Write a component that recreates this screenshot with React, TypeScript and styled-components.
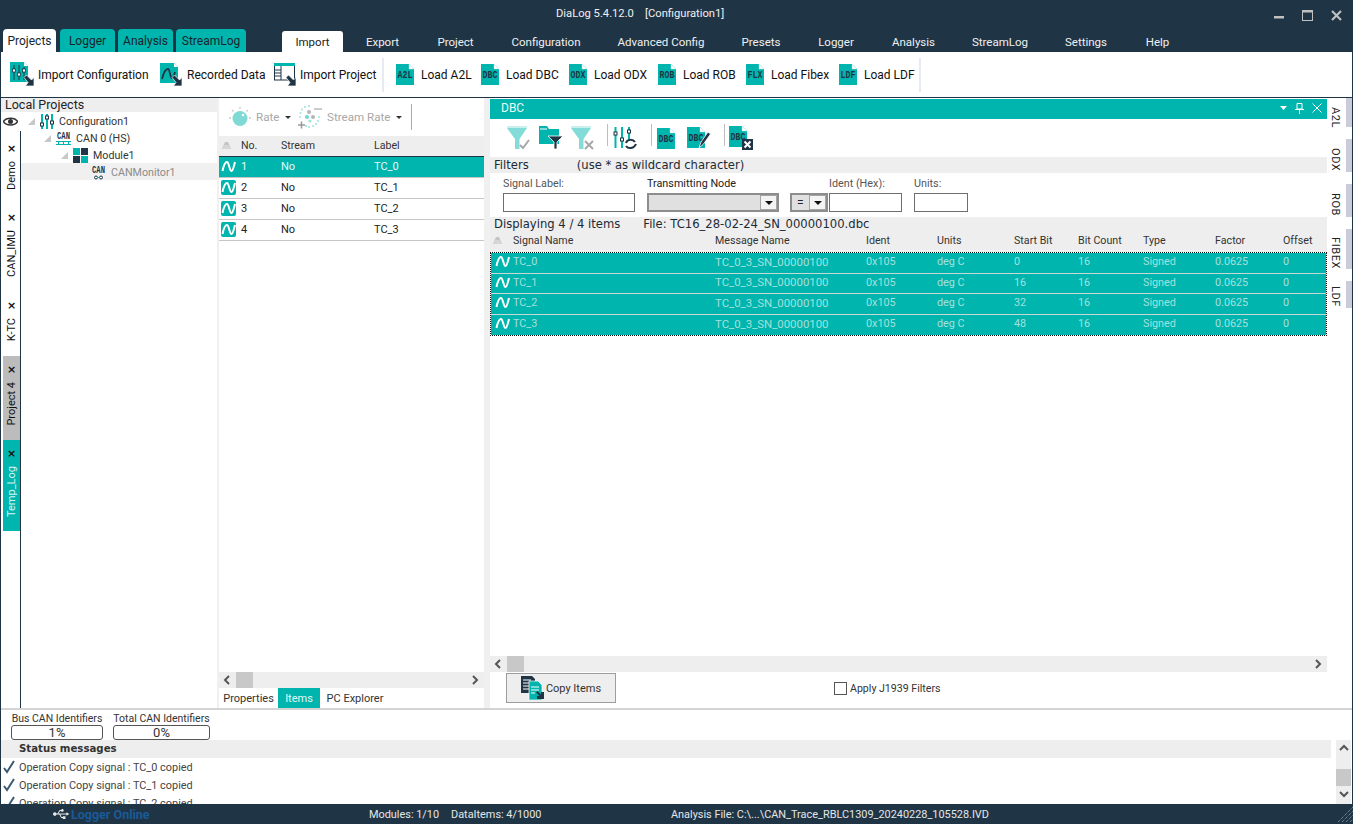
import React from "react";
import styled, { createGlobalStyle } from "styled-components";
import { FaUsb } from "react-icons/fa";

const TEAL = "#00b5ad";
const NAVY = "#1f3546";
const UI = `Roboto, "Liberation Sans", Arial, sans-serif`;

const Global = createGlobalStyle`
  html, body { margin: 0; padding: 0; background: ${NAVY}; }
  * { box-sizing: border-box; }
  body { font-family: ${UI}; font-size: 11px; color: #222; overflow: hidden; }
`;

const Shell = styled.div`
  width: 1353px; height: 824px; display: flex; flex-direction: column; background: ${NAVY}; overflow: hidden;
`;
const TitleBar = styled.div`
  height: 30px; flex: none; display: flex; align-items: center; color: #f0f0f0; padding-left: 556px; white-space: pre; font-size: 11.2px; padding-bottom: 4px;
`;
const WindowButtons = styled.div`
  margin-left: auto; display: flex; align-items: center; gap: 18px; padding-right: 11px; padding-top: 4px;
`;
const TabRow = styled.div`
  height: 22px; flex: none; display: flex; align-items: flex-end; padding-left: 3px; font-size: 12px;
`;
const AppTab = styled.div<{ $w: number; $gap: number; $active?: boolean }>`
  width: ${p => p.$w}px; height: 23px; margin-right: ${p => p.$gap}px; display: flex; align-items: center; justify-content: center;
  border-radius: 4px 4px 0 0; background: ${p => (p.$active ? "#fff" : TEAL)}; color: #18242c;
`;
const MenuTabs = styled.div`
  display: flex; margin-left: 33px; align-items: flex-end; font-size: 11.5px;
`;
const MenuTab = styled.div<{ $w: number; $active?: boolean }>`
  width: ${p => p.$w}px; height: 21px; display: flex; align-items: center; justify-content: center;
  border-radius: 3px 3px 0 0; background: ${p => (p.$active ? "#fff" : "transparent")}; color: ${p => (p.$active ? "#222" : "#f0f0f0")};
`;
const Ribbon = styled.div`
  height: 46px; flex: none; background: #fff; border-bottom: 1px solid ${NAVY}; margin: 0 1px; display: flex; align-items: center; padding: 0 0 0 9px;
`;
const RibbonItem = styled.div<{ $w: number; $gap: number }>`
  width: ${p => p.$w}px; display: flex; align-items: center; gap: ${p => p.$gap}px; color: #111; white-space: nowrap; font-size: 12px;
`;
const RibbonGap = styled.div<{ $w: number }>`
  width: ${p => p.$w}px; height: 34px; display: flex; justify-content: flex-start; padding-left: 2px;
  &::after { content: ""; width: 2px; background: #e6eaf2; }
`;
const Workspace = styled.div`
  height: 610px; flex: none; display: flex; background: #fff; margin: 0 0 0 1px; border-right: 1px solid ${NAVY};
`;
const LeftColumn = styled.div`
  width: 216px; flex: none; display: flex; flex-direction: column;
`;
const PaneTitle = styled.div`
  height: 14px; background: #eeeeee; padding-left: 4px; line-height: 14px; font-size: 12.5px; color: #222; flex: none;
`;
const LeftBody = styled.div`
  flex: 1; display: flex; min-height: 0;
`;
const Strip = styled.div`
  width: 20px; flex: none; display: flex; flex-direction: column; padding-left: 2px;
`;
const EyeCell = styled.div`
  height: 20px; flex: none; display: flex; align-items: center; margin-top: -1px;
`;
const VTabs = styled.div`
  flex: 1; border-right: 1px solid ${NAVY}; display: flex; flex-direction: column; padding-top: 4px;
`;
const VTab = styled.div<{ $h: number; $bg?: string; $light?: boolean }>`
  height: ${p => p.$h}px; background: ${p => p.$bg || "transparent"}; color: ${p => (p.$light ? "#d9f4f2" : "#111")};
  display: flex; flex-direction: column; align-items: center; padding-top: 9px; gap: 7px; flex: none;
`;
const VClose = styled.span`
  font: bold 11px/10px "DejaVu Sans", sans-serif; color: #111;
`;
const VLabel = styled.span`
  writing-mode: vertical-rl; transform: rotate(180deg); white-space: nowrap; font-size: 11px; line-height: 16px;
`;
const Tree = styled.div`
  flex: 1; padding-top: 0;
`;
const TreeRow = styled.div<{ $indent: number; $selected?: boolean; $muted?: boolean }>`
  height: 17px; display: flex; align-items: center; gap: 5px; padding: 2px 0 0 ${p => p.$indent}px;
  background: ${p => (p.$selected ? "#f0f0f0" : "transparent")}; color: ${p => (p.$muted ? "#8a8a8a" : "#333")}; white-space: nowrap; font-size: 10.7px;
`;
const VSplit = styled.div<{ $w: number }>`
  width: ${p => p.$w}px; flex: none; background: #f0f0f0;
`;
const MidPane = styled.div`
  width: 265px; flex: none; display: flex; flex-direction: column;
`;
const MidToolbar = styled.div`
  height: 38px; flex: none; display: flex; align-items: center; padding-left: 10px; color: #a8a8a8;
`;
const ToolLabel = styled.span<{ $w: number }>`
  width: ${p => p.$w}px; padding-left: 5px; font-size: 11.6px; white-space: nowrap;
`;
const Caret = styled.span`
  width: 0; height: 0; border-left: 3px solid transparent; border-right: 3px solid transparent; border-top: 3px solid #333; flex: none;
`;
const ToolGap = styled.span`
  width: 7px; flex: none;
`;
const ToolSep = styled.span`
  width: 1px; height: 26px; background: #aaa; margin-left: 9px;
`;
const MidHead = styled.div`
  display: grid; grid-template-columns: 22px 40px 93px 1fr; height: 21px; align-items: center; background: #eeeeee; color: #333; flex: none; font-size: 10.6px; border-bottom: 1px solid ${NAVY}; padding-bottom: 2px;
`;
const DbcHead = styled.div`
  display: grid; grid-template-columns: 23px 202px 151px 71px 77px 64px 65px 72px 68px 44px; height: 21px; align-items: center; background: #eeeeee; color: #333; flex: none; font-size: 10.7px; padding-bottom: 3px;
`;
const MidRow = styled.div<{ $selected?: boolean }>`
  display: grid; grid-template-columns: 20px 40px 93px 1fr; height: 21px; flex: none; align-items: center;
  background: ${p => (p.$selected ? TEAL : "#fff")}; color: ${p => (p.$selected ? "#e6f8f7" : "#222")};
  border-bottom: 1px solid #c6c6c6; padding: 0 0 2px 2px; font-size: 11px;
`;
const SortCell = styled.span`
  display: flex; justify-content: flex-start; padding-left: 3px;
`;
const Spacer = styled.div`
  flex: 1; min-height: 0;
`;
const HScroll = styled.div`
  height: 16px; flex: none; background: #eeeeee; display: flex; align-items: center; color: #555;
`;
const ScrollThumb = styled.div<{ $w: number; $h: number }>`
  width: ${p => p.$w}px; height: ${p => p.$h}px; background: #c8c8c8; flex: none;
`;
const ArrowCell = styled.div<{ $w: number }>`
  width: ${p => p.$w}px; flex: none; display: flex; justify-content: center; align-items: center;
`;
const BottomTabs = styled.div`
  height: 20px; flex: none; display: flex;
`;
const BottomTab = styled.div<{ $w: number; $active?: boolean }>`
  width: ${p => p.$w}px; display: flex; align-items: center; justify-content: center; background: ${p => (p.$active ? TEAL : "#fff")}; color: ${p => (p.$active ? "#e6f8f7" : "#333")}; font-size: 11px; white-space: nowrap;
`;
const DbcPane = styled.div`
  width: 837px; flex: none; display: flex; flex-direction: column;
`;
const DockHead = styled.div`
  height: 20px; margin-top: 1px; flex: none; background: ${TEAL}; color: #eafafa; display: flex; align-items: center; padding: 0 0 2px 11px; font-size: 12px;
`;
const DockButtons = styled.div`
  margin-left: auto; display: flex; align-items: center; gap: 8px; padding-right: 5px;
`;
const DbcToolbar = styled.div`
  height: 38px; flex: none; display: flex; align-items: center; padding: 0 0 0 17px;
`;
const ToolSlot = styled.div<{ $w: number }>`
  width: ${p => p.$w}px; flex: none; display: flex; align-items: center;
`;
const DotSep = styled.div<{ $w: number }>`
  width: ${p => p.$w}px; height: 22px; flex: none; margin-bottom: 6px; display: flex; justify-content: center;
  &::after { content: ""; width: 1px; background: #bdbdbd; }
`;
const WideBar = styled.div<{ $h: number }>`
  height: ${p => p.$h}px; flex: none; background: #eeeeee; display: flex; align-items: center; padding: 0 0 1px 4px; font-family: "DejaVu Sans", sans-serif; font-size: 11.6px; color: #1c2a36; white-space: pre;
`;
const BarNote = styled.span<{ $ml: number }>`
  margin-left: ${p => p.$ml}px;
`;
const FilterForm = styled.div`
  height: 44px; flex: none; display: flex; padding: 4px 0 0 13px; align-items: flex-start;
`;
const Field = styled.div<{ $w: number; $ml: number }>`
  width: ${p => p.$w}px; margin-left: ${p => p.$ml}px; flex: none; display: flex; flex-direction: column; gap: 2px; font-size: 10.8px; color: #555; white-space: nowrap;
`;
const FieldLabel = styled.label<{ $dark?: boolean }>`
  height: 14px; line-height: 14px; color: ${p => (p.$dark ? "#222" : "#555")};
`;
const TextBox = styled.input`
  height: 19px; width: 100%; border: 1px solid #6e6e6e; background: #fff; padding: 0; display: block; outline: none;
`;
const Dropdown = styled.div`
  height: 19px; width: 100%; border: 2px solid #8d8d8d; background: #e0e0e0; display: flex; align-items: center; justify-content: space-between; color: #222; font-size: 12px; padding: 0 0 0 5px;
`;
const DropButton = styled.span`
  width: 17px; height: 15px; flex: none; background: #f4f4f4; border: 1px solid #a5a5a5; display: flex; align-items: center; justify-content: center;
  &::after { content: ""; border-left: 4px solid transparent; border-right: 4px solid transparent; border-top: 4px solid #111; }
`;
const SignalList = styled.div`
  border: 1px dotted #111; flex: none;
`;
const SignalRow = styled.div<{ $last?: boolean }>`
  display: grid; grid-template-columns: 22px 202px 151px 71px 77px 64px 65px 72px 68px 43px; height: 20.5px; align-items: center; background: ${TEAL}; color: #a5e0dd; border-bottom: ${p => (p.$last ? "0" : "1px solid #c8d8d6")}; font-size: 10.8px; padding-bottom: 2px;
`;
const MsgName = styled.span`
  font-size: 11.4px;
`;
const WaveCell = styled.span`
  display: flex; justify-content: center; padding-left: 1px;
`;
const FooterBar = styled.div`
  height: 36px; flex: none; display: flex; align-items: center; padding-left: 16px; padding-bottom: 4px;
`;
const CopyButton = styled.button`
  width: 110px; height: 30px; border: 1px solid #9d9d9d; background: #eeeeee; display: flex; align-items: center; justify-content: center; gap: 1px; color: #333; font: 11px ${UI}; padding: 0;
`;
const CheckLine = styled.label`
  margin-left: 218px; display: flex; align-items: center; gap: 3px; color: #333; font-size: 10.6px;
`;
const CheckBoxMark = styled.span`
  width: 13px; height: 13px; border: 1px solid #555; background: #fff; display: block;
`;
const SideTabs = styled.div`
  width: 25px; flex: none; display: flex; flex-direction: column; gap: 12px;
`;
const SideTab = styled.div<{ $h: number; $pt: number }>`
  height: ${p => p.$h}px; border-right: 6px solid #cbcbd9; display: flex; padding: ${p => p.$pt}px 0 0 2px; color: #222; flex: none;
`;
const SideLabel = styled.span`
  writing-mode: vertical-rl; font-size: 11px; line-height: 12px; letter-spacing: 0.6px; white-space: nowrap;
`;
const HSplit = styled.div`
  height: 2px; flex: none; margin: 0 1px; background: #d4d4d4;
`;
const GaugeRow = styled.div`
  height: 30px; flex: none; margin: 0 1px; background: #fff; display: flex; gap: 10px; padding: 2px 0 0 10px;
`;
const Gauge = styled.div<{ $w: number }>`
  width: ${p => p.$w}px; display: flex; flex-direction: column; color: #333; font-size: 10.5px; white-space: nowrap;
`;
const GaugeCaption = styled.div`
  height: 13px; line-height: 13px; text-align: center;
`;
const GaugeBar = styled.div`
  height: 15px; border: 1px solid #555; border-radius: 3px; text-align: center; line-height: 14px; font-size: 13px; color: #333;
`;
const StatusArea = styled.div`
  height: 64px; flex: none; margin: 0 1px; background: #fff; display: flex; overflow: hidden;
`;
const StatusMain = styled.div`
  width: 1330px; flex: none; display: flex; flex-direction: column;
`;
const StatusHead = styled.div`
  height: 18px; flex: none; background: #eeeeee; padding-left: 18px; font: bold 10.2px/18px "DejaVu Sans", sans-serif; color: #333;
`;
const Msg = styled.div`
  height: 18px; flex: none; display: flex; align-items: center; gap: 3px; padding-left: 2px; color: #444; font-size: 10.9px;
`;
const VScroll = styled.div`
  width: 15px; margin-left: 5px; flex: none; background: #eeeeee; display: flex; flex-direction: column; align-items: center;
`;
const VScrollGap = styled.div<{ $h: number }>`
  height: ${p => p.$h}px; flex: none; display: flex; align-items: center; justify-content: center;
`;
const StatusBar = styled.div`
  height: 20px; flex: none; display: flex; align-items: center; color: #e6e6e6; font-size: 10.9px; white-space: pre; padding-left: 53px;
`;
const Online = styled.span`
  color: #1a5a98; font-weight: bold; margin-left: 2px; width: 298px; font-size: 12.5px;
`;
const StatusText = styled.span<{ $w: number }>`
  width: ${p => p.$w}px; flex: none;
`;
const Grip = styled.svg`
  margin-left: auto; flex: none;
`;

const DOC_FONT = "'Liberation Mono',monospace";
const DocPage = ({ label, cx = 9 }: { label: string; cx?: number }) => (
  <>
    <path d="M0 0H13L18 5V21H0Z" fill={TEAL} />
    <path d="M13 0L18 5H13Z" fill="#fff" stroke="#bfeeea" strokeWidth=".4" />
    <text transform={`translate(${cx} 13.5) scale(.72 1)`} textAnchor="middle" fontFamily={DOC_FONT} fontSize="11.5" fontWeight="700" fill={NAVY}>{label}</text>
  </>
);
const Doc = ({ label }: { label: string }) => (
  <svg width="18" height="21" viewBox="0 0 18 21" style={{ flex: "none" }}><DocPage label={label} /></svg>
);
const CornerArrow = ({ x, y }: { x: number; y: number }) => (
  <path transform={`translate(${x} ${y})`} d="M0 2.500L2.500 0L7.500 5L10 2.500V11H1.500L4 7.500Z" fill={NAVY} stroke="#fff" strokeWidth=".7" />
);
const ImportConfigIcon = () => (
  <svg width="25" height="25" viewBox="0 0 25 25" style={{ flex: "none" }}>
    <path d="M0 0H14L18 4V20H0Z" fill={TEAL} /><path d="M14 0L18 4H14Z" fill="#fff" />
    <path d="M4 3V18M9 3V18M14 5V18" stroke={NAVY} strokeWidth="1" />
    <g fill="#fff" stroke={NAVY} strokeWidth=".8"><rect x="2.500" y="7" width="3" height="3" /><rect x="7.500" y="11" width="3" height="3" /><rect x="12.500" y="7" width="3" height="3" /></g>
    <CornerArrow x={14} y={13} />
  </svg>
);
const RecordedIcon = () => (
  <svg width="23" height="24" viewBox="0 0 23 24" style={{ flex: "none" }}>
    <path d="M0 0H14L18 4V20H0Z" fill={TEAL} /><path d="M14 0L18 4H14Z" fill="#fff" />
    <path d="M2 16C4 8 6 6 8 6C10 6 10 15 12 15C13.500 15 14 12 15 9" fill="none" stroke={NAVY} strokeWidth="1.800" />
    <CornerArrow x={12} y={12} />
  </svg>
);
const ProjectIcon = () => (
  <svg width="23" height="24" viewBox="0 0 23 24" style={{ flex: "none" }}>
    <rect x=".5" y="2" width="20" height="15" fill="#fff" stroke={NAVY} />
    <rect x="0" y="0" width="21" height="3" fill={TEAL} />
    <path d="M7 3V17M1 7H7M1 10H7M1 13H7" stroke={NAVY} />
    <CornerArrow x={12} y={12} />
  </svg>
);
const WAVE = "M1.5 12C3 5 4.500 3 6 3C8 3 8.500 12 10.500 12C12 12 13 7 14 3";
const WaveIcon = ({ bare }: { bare?: boolean }) => (
  <svg width="15" height="15" viewBox="0 0 15 15" style={{ display: "block" }}>
    {!bare && <rect width="15" height="15" rx="2" fill={TEAL} />}
    <path d={WAVE} fill="none" stroke="#fff" strokeWidth="2" />
  </svg>
);
const EyeIcon = () => (
  <svg width="15" height="11" viewBox="0 0 15 11">
    <path d="M.5 5.5C3 1 12 1 14.500 5.500C12 10 3 10 .5 5.500Z" fill="none" stroke="#333" strokeWidth="1.5" />
    <circle cx="7.500" cy="5.500" r="2.500" fill="#333" />
  </svg>
);
const Expander = () => (
  <svg width="7" height="7" viewBox="0 0 7 7" style={{ flex: "none" }}><path d="M7 0V7H0Z" fill="#c8c8c8" /></svg>
);
const SlidersIcon = () => (
  <svg width="14" height="15" viewBox="0 0 14 15" style={{ flex: "none" }}>
    <path d="M2 0V15M7 0V15M12 0V15" stroke={TEAL} strokeWidth="2" />
    <g fill="#fff" stroke={NAVY}><rect x=".5" y="9" width="3" height="3" /><rect x="5.500" y="2" width="3" height="3" /><rect x="10.500" y="7" width="3" height="3" /></g>
  </svg>
);
const CanIcon = ({ monitor }: { monitor?: boolean }) => (
  <svg width="15" height="15" viewBox="0 0 15 15" style={{ flex: "none" }}>
    <text transform="translate(7.500 7.500) scale(.72 1)" textAnchor="middle" fontFamily={DOC_FONT} fontSize="10" fontWeight="700" fill={NAVY}>CAN</text>
    {monitor ? (
      <g fill="none" stroke={NAVY}><circle cx="5" cy="12.500" r="1.500" /><circle cx="10" cy="12.500" r="1.500" /><path d="M6 12.500H9" stroke={TEAL} /></g>
    ) : (
      <g stroke={TEAL} fill="none"><path d="M0 10.500H15M0 13.500H15" /><path d="M2.500 10V14M7.500 10V14M12.500 10V14" /></g>
    )}
  </svg>
);
const ModuleIcon = () => (
  <svg width="15" height="15" viewBox="0 0 15 15" style={{ flex: "none" }}>
    <rect width="7" height="7" fill={TEAL} /><rect x="8" width="7" height="7" fill={NAVY} />
    <rect y="8" width="7" height="7" fill={NAVY} /><rect x="8" y="8" width="7" height="7" fill={TEAL} />
  </svg>
);
const RateIcon = () => (
  <svg width="22" height="20" viewBox="0 0 22 20" style={{ flex: "none" }}>
    <circle cx="11" cy="11.500" r="7.500" fill="#7fdad5" />
    <circle cx="14" cy="8" r="1.200" fill="#fff" />
    <g stroke="#c9c9c9" strokeWidth="1.300"><path d="M11 0V2M3 3L4.500 4.500M19 3L17.500 4.500M0 11H2M20 11H22" /></g>
  </svg>
);
const StreamIcon = () => (
  <svg width="24" height="24" viewBox="0 0 24 24" style={{ flex: "none" }}>
    <g fill="#9fe3df">
      {[[11, 1], [7, 2], [4, 4.500], [2.500, 8], [2, 12], [21, 12], [20, 16], [18, 19], [15, 21], [11, 22], [8, 21]].map(([x, y], i) => <circle key={i} cx={x} cy={y} r="1" />)}
    </g>
    <g fill="#b5b5b5"><circle cx="11" cy="7" r="2" /><circle cx="15" cy="12" r="2" /></g>
    <circle cx="9" cy="12" r="2" fill="#6fd6d0" />
    <circle cx="12" cy="16" r="1.600" fill="#9fe3df" />
    <path d="M16 4H24" stroke="#bbb" strokeWidth="1.500" />
    <path d="M0 20H7M3.500 16.500V23.500" stroke="#9a9a9a" strokeWidth="1.500" />
  </svg>
);
const Funnel = ({ mark }: { mark: "check" | "x" }) => (
  <svg width="24" height="24" viewBox="0 0 24 24" style={{ flex: "none" }}>
    <path d="M0 2H20L12.500 13V23H8V13Z" fill="#83dcd7" />
    <path d="M0 1H20" stroke="#b4ebe8" strokeWidth="1.500" />
    {mark === "check"
      ? <path d="M13 19L16 22L22 14" fill="none" stroke="#a7a7a7" strokeWidth="2" />
      : <path d="M14 15L22 23M22 15L14 23" fill="none" stroke="#a7a7a7" strokeWidth="2" />}
  </svg>
);
const FolderFunnel = () => (
  <svg width="24" height="24" viewBox="0 0 24 24" style={{ flex: "none" }}>
    <path d="M0 0H8L10 3H20V18H0Z" fill={TEAL} />
    <path d="M1 3H8" stroke="#fff" />
    <path d="M9 10H24L18 16V23H15V16Z" fill={NAVY} stroke="#fff" strokeWidth=".8" />
  </svg>
);
const SliderRefresh = () => (
  <svg width="24" height="24" viewBox="0 0 24 24" style={{ flex: "none" }}>
    <path d="M2.500 1V22M9 1V22M16 1V14" stroke={TEAL} strokeWidth="2" />
    <g fill="#fff" stroke={NAVY}><rect x="1" y="6" width="3" height="3" /><rect x="7.500" y="12" width="3" height="3" /><rect x="14.500" y="4" width="3" height="3" /></g>
    <path d="M13 17C14 13 20 13 22 16M23 18C21 23 15 23 13 20" fill="none" stroke={NAVY} strokeWidth="2" />
  </svg>
);
const DocPen = () => (
  <svg width="24" height="22" viewBox="0 0 24 22" style={{ flex: "none" }}>
    <DocPage label="DBC" />
    <path d="M12 21L14 15L21 5L23.500 7L16.500 17Z" fill={NAVY} stroke="#fff" strokeWidth=".8" />
  </svg>
);
const DocX = () => (
  <svg width="24" height="24" viewBox="0 0 24 24" style={{ flex: "none" }}>
    <DocPage label="DBC" />
    <rect x="13" y="13" width="11" height="11" fill={NAVY} />
    <path d="M15.500 15.500L21.500 21.500M21.500 15.500L15.500 21.500" stroke="#fff" strokeWidth="2" />
  </svg>
);
const CopyIcon = () => (
  <svg width="24" height="24" viewBox="0 0 24 24" style={{ flex: "none" }}>
    <path d="M0 0H11L14 3V17H0Z" fill={NAVY} />
    <path d="M2 4H10M2 7H10M2 10H10M2 13H10" stroke="#fff" />
    <path d="M8 5H17L21 9V24H8Z" fill={TEAL} stroke="#fff" strokeWidth=".7" />
    <path d="M10 11H18M10 14H18M10 17H14" stroke="#fff" />
    <path d="M15 16.500L16.500 15L20 18.500V16H23V23H16V20H18.500Z" fill={NAVY} />
  </svg>
);
const SortGlyph = () => (
  <svg width="9" height="7" viewBox="0 0 9 7"><path d="M3 0H6L9 7H0Z" fill="#c4c4c4" /><path d="M1 6H8M2 4H7" stroke="#e8e8e8" /></svg>
);
const Chevron = ({ dir }: { dir: "l" | "r" | "u" | "d" }) => {
  const d = { l: "M6 1L2 5L6 9", r: "M2 1L6 5L2 9", u: "M1 6L5 2L9 6", d: "M1 2L5 6L9 2" }[dir];
  return <svg width="10" height="10" viewBox="0 0 10 10" style={{ display: "block" }}><path d={d} fill="none" stroke="#555" strokeWidth="2" /></svg>;
};
const Tick = () => (
  <svg width="13" height="14" viewBox="0 0 13 14" style={{ flex: "none" }}><path d="M1 8L4 12L11 1" fill="none" stroke="#3c5a73" strokeWidth="2" /></svg>
);

const menus: [string, number][] = [
  ["Export", 79], ["Project", 67], ["Configuration", 114], ["Advanced Config", 116], ["Presets", 84], ["Logger", 66], ["Analysis", 89], ["StreamLog", 84], ["Settings", 88], ["Help", 55],
];
const ribbonDocs: [string, string, number][] = [
  ["A2L", "Load A2L", 85], ["DBC", "Load DBC", 88], ["ODX", "Load ODX", 89], ["ROB", "Load ROB", 88], ["FLX", "Load Fibex", 93], ["LDF", "Load LDF", 78],
];
const signals = ["TC_0", "TC_1", "TC_2", "TC_3"];
const starts = [0, 16, 32, 48];

export default function App() {
  return (
    <Shell>
      <Global />
      <TitleBar>
        DiaLog 5.4.12.0    [Configuration1]
        <WindowButtons>
          <svg width="10" height="10" viewBox="0 0 10 10"><rect y="6" width="10" height="2.500" fill="#c0c0c0" /></svg>
          <svg width="11" height="11" viewBox="0 0 11 11"><rect x=".5" y=".5" width="10" height="10" fill="none" stroke="#c0c0c0" /><rect width="11" height="2.500" fill="#c0c0c0" /></svg>
          <svg width="11" height="11" viewBox="0 0 11 11"><path d="M1 1L10 10M10 1L1 10" stroke="#c0c0c0" strokeWidth="2.200" /></svg>
        </WindowButtons>
      </TitleBar>
      <TabRow>
        <AppTab $w={53} $gap={4} $active>Projects</AppTab>
        <AppTab $w={55} $gap={3}>Logger</AppTab>
        <AppTab $w={55} $gap={3}>Analysis</AppTab>
        <AppTab $w={70} $gap={3}>StreamLog</AppTab>
        <MenuTabs>
          <MenuTab $w={61} $active>Import</MenuTab>
          {menus.map(([m, w]) => <MenuTab key={m} $w={w}>{m}</MenuTab>)}
        </MenuTabs>
      </TabRow>
      <Ribbon>
        <RibbonItem $w={150} $gap={3}><ImportConfigIcon />Import Configuration</RibbonItem>
        <RibbonItem $w={114} $gap={4}><RecordedIcon />Recorded Data</RibbonItem>
        <RibbonItem $w={106} $gap={3}><ProjectIcon />Import Project</RibbonItem>
        <RibbonGap $w={16} />
        {ribbonDocs.map(([d, t, w]) => <RibbonItem key={d} $w={w} $gap={7}><Doc label={d} />{t}</RibbonItem>)}
        <RibbonGap $w={6} />
      </Ribbon>
      <Workspace>
        <LeftColumn>
          <PaneTitle>Local Projects</PaneTitle>
          <LeftBody>
            <Strip>
              <EyeCell><EyeIcon /></EyeCell>
              <VTabs>
                <VTab $h={69}><VClose>×</VClose><VLabel>Demo</VLabel></VTab>
                <VTab $h={88}><VClose>×</VClose><VLabel>CAN_IMU</VLabel></VTab>
                <VTab $h={64}><VClose>×</VClose><VLabel>K-TC</VLabel></VTab>
                <VTab $h={84} $bg="#bcbcbc"><VClose>×</VClose><VLabel>Project 4</VLabel></VTab>
                <VTab $h={91} $bg={TEAL} $light><VClose>×</VClose><VLabel>Temp_Log</VLabel></VTab>
              </VTabs>
            </Strip>
            <Tree>
              <TreeRow $indent={7}><Expander /><SlidersIcon />Configuration1</TreeRow>
              <TreeRow $indent={23}><Expander /><CanIcon />CAN 0 (HS)</TreeRow>
              <TreeRow $indent={40}><Expander /><ModuleIcon />Module1</TreeRow>
              <TreeRow $indent={70} $selected $muted><CanIcon monitor />CANMonitor1</TreeRow>
            </Tree>
          </LeftBody>
        </LeftColumn>
        <VSplit $w={2} />
        <MidPane>
          <MidToolbar>
            <RateIcon /><ToolLabel $w={34}>Rate</ToolLabel><Caret />
            <ToolGap />
            <StreamIcon /><ToolLabel $w={74}>Stream Rate</ToolLabel><Caret />
            <ToolSep />
          </MidToolbar>
          <MidHead>
            <SortCell><SortGlyph /></SortCell><span>No.</span><span>Stream</span><span>Label</span>
          </MidHead>
          {signals.map((s, i) => (
            <MidRow key={s} $selected={i === 0}>
              <WaveIcon bare={i === 0} /><span>{i + 1}</span><span>No</span><span>{s}</span>
            </MidRow>
          ))}
          <Spacer />
          <HScroll>
            <ArrowCell $w={17}><Chevron dir="l" /></ArrowCell>
            <ScrollThumb $w={17} $h={16} />
            <Spacer />
            <ArrowCell $w={17}><Chevron dir="r" /></ArrowCell>
          </HScroll>
          <BottomTabs>
            <BottomTab $w={59}>Properties</BottomTab>
            <BottomTab $w={42} $active>Items</BottomTab>
            <BottomTab $w={70}>PC Explorer</BottomTab>
          </BottomTabs>
        </MidPane>
        <VSplit $w={6} />
        <DbcPane>
          <DockHead>
            DBC
            <DockButtons>
              <svg width="7" height="4" viewBox="0 0 7 4"><path d="M0 0H7L3.500 4Z" fill="#fff" /></svg>
              <svg width="9" height="11" viewBox="0 0 9 11"><path d="M2 .5H7V6H2ZM0 6.500H9M4.500 7V11" fill="none" stroke="#fff" /></svg>
              <svg width="10" height="10" viewBox="0 0 10 10"><path d="M.5 .5L9.500 9.500M9.500 .5L.5 9.500" stroke="#fff" /></svg>
            </DockButtons>
          </DockHead>
          <DbcToolbar>
            <ToolSlot $w={32}><Funnel mark="check" /></ToolSlot>
            <ToolSlot $w={32}><FolderFunnel /></ToolSlot>
            <ToolSlot $w={31}><Funnel mark="x" /></ToolSlot>
            <DotSep $w={11} />
            <ToolSlot $w={32}><SliderRefresh /></ToolSlot>
            <DotSep $w={12} />
            <ToolSlot $w={30}><Doc label="DBC" /></ToolSlot>
            <ToolSlot $w={32}><DocPen /></ToolSlot>
            <DotSep $w={10} />
            <ToolSlot $w={30}><DocX /></ToolSlot>
          </DbcToolbar>
          <WideBar $h={16}>Filters<BarNote $ml={48}>(use * as wildcard character)</BarNote></WideBar>
          <FilterForm>
            <Field $w={132} $ml={0}><FieldLabel>Signal Label:</FieldLabel><TextBox /></Field>
            <Field $w={132} $ml={12}><FieldLabel $dark>Transmitting Node</FieldLabel><Dropdown><span /><DropButton /></Dropdown></Field>
            <Field $w={38} $ml={11}><FieldLabel>&nbsp;</FieldLabel><Dropdown>=<DropButton /></Dropdown></Field>
            <Field $w={73} $ml={1}><FieldLabel>Ident (Hex):</FieldLabel><TextBox /></Field>
            <Field $w={54} $ml={12}><FieldLabel>Units:</FieldLabel><TextBox /></Field>
          </FilterForm>
          <WideBar $h={14}>Displaying 4 / 4 items<BarNote $ml={23}>File: TC16_28-02-24_SN_00000100.dbc</BarNote></WideBar>
          <DbcHead>
            <SortCell><SortGlyph /></SortCell>
            <span>Signal Name</span><span>Message Name</span><span>Ident</span><span>Units</span><span>Start Bit</span><span>Bit Count</span><span>Type</span><span>Factor</span><span>Offset</span>
          </DbcHead>
          <SignalList>
            {signals.map((s, i) => (
              <SignalRow key={s} $last={i === 3}>
                <WaveCell><WaveIcon bare /></WaveCell>
                <span>{s}</span><MsgName>TC_0_3_SN_00000100</MsgName><span>0x105</span><span>deg C</span><span>{starts[i]}</span><span>16</span><span>Signed</span><span>0.0625</span><span>0</span>
              </SignalRow>
            ))}
          </SignalList>
          <Spacer />
          <HScroll>
            <ArrowCell $w={17}><Chevron dir="l" /></ArrowCell>
            <ScrollThumb $w={17} $h={16} />
            <Spacer />
            <ArrowCell $w={17}><Chevron dir="r" /></ArrowCell>
          </HScroll>
          <FooterBar>
            <CopyButton><CopyIcon />Copy Items</CopyButton>
            <CheckLine><CheckBoxMark />Apply J1939 Filters</CheckLine>
          </FooterBar>
        </DbcPane>
        <SideTabs>
          <SideTab $h={29} $pt={9}><SideLabel>A2L</SideLabel></SideTab>
          <SideTab $h={33} $pt={9}><SideLabel>ODX</SideLabel></SideTab>
          <SideTab $h={33} $pt={9}><SideLabel>ROB</SideLabel></SideTab>
          <SideTab $h={40} $pt={8}><SideLabel>FIBEX</SideLabel></SideTab>
          <SideTab $h={27} $pt={5}><SideLabel>LDF</SideLabel></SideTab>
        </SideTabs>
      </Workspace>
      <HSplit />
      <GaugeRow>
        <Gauge $w={92}><GaugeCaption>Bus CAN Identifiers</GaugeCaption><GaugeBar>1%</GaugeBar></Gauge>
        <Gauge $w={97}><GaugeCaption>Total CAN Identifiers</GaugeCaption><GaugeBar>0%</GaugeBar></Gauge>
      </GaugeRow>
      <StatusArea>
        <StatusMain>
          <StatusHead>Status messages</StatusHead>
          <Msg><Tick />Operation Copy signal : TC_0 copied</Msg>
          <Msg><Tick />Operation Copy signal : TC_1 copied</Msg>
          <Msg><Tick />Operation Copy signal : TC_2 copied</Msg>
        </StatusMain>
        <VScroll>
          <VScrollGap $h={17}><Chevron dir="u" /></VScrollGap>
          <VScrollGap $h={12} />
          <ScrollThumb $w={15} $h={17} />
          <VScrollGap $h={18}><Chevron dir="d" /></VScrollGap>
        </VScroll>
      </StatusArea>
      <StatusBar>
        <FaUsb size={16} color="#e8e8e8" />
        <Online>Logger Online</Online>
        <StatusText $w={82}>Modules: 1/10</StatusText>
        <StatusText $w={220}>DataItems: 4/1000</StatusText>
        <StatusText $w={330}>Analysis File: C:\...\CAN_Trace_RBLC1309_20240228_105528.IVD</StatusText>
        <Grip width="16" height="16" viewBox="0 0 16 16"><path d="M1 16L16 1M5 16L16 5M9 16L16 9M13 16L16 13" stroke="#9aa6af" strokeDasharray="1 1" /></Grip>
      </StatusBar>
    </Shell>
  );
}
